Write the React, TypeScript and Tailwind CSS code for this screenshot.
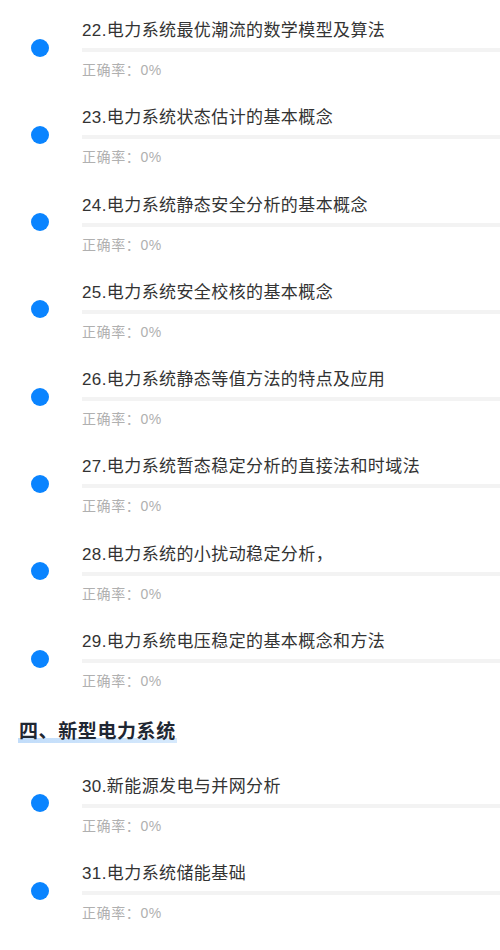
import type React from 'react';

interface Lesson {
  title: string;
  rate: string;
}

const FONT = "font-['Liberation_Sans','Noto_Sans_CJK_SC',sans-serif]";

const GROUP_A: Lesson[] = [
  { title: '22.电力系统最优潮流的数学模型及算法', rate: '0%' },
  { title: '23.电力系统状态估计的基本概念', rate: '0%' },
  { title: '24.电力系统静态安全分析的基本概念', rate: '0%' },
  { title: '25.电力系统安全校核的基本概念', rate: '0%' },
  { title: '26.电力系统静态等值方法的特点及应用', rate: '0%' },
  { title: '27.电力系统暂态稳定分析的直接法和时域法', rate: '0%' },
  { title: '28.电力系统的小扰动稳定分析，', rate: '0%' },
  { title: '29.电力系统电压稳定的基本概念和方法', rate: '0%' },
];

const GROUP_B: Lesson[] = [
  { title: '30.新能源发电与并网分析', rate: '0%' },
  { title: '31.电力系统储能基础', rate: '0%' },
];

/** 单个课节行：蓝点 + 标题 + 进度条 + 正确率 */
const LessonRow: React.FC<{ lesson: Lesson }> = ({ lesson }) => (
  <div className="flex h-[87.3px] items-start pt-[18px]">
    <div className="w-[82px] shrink-0 pl-[30.5px]">
      <div className="mt-[20.5px] h-[18px] w-[18px] rounded-full bg-[#0a84ff]" />
    </div>
    <div className="min-w-0 flex-1">
      <div className="h-[24px] whitespace-nowrap text-[17px] leading-[25px] tracking-[0.4px] text-[#333333]">
        {lesson.title}
      </div>
      <div className="mt-[6px] h-[4px] w-full bg-[#f3f3f3]" />
      <div className="mt-[8px] h-[20px] text-[14px] leading-[20px] tracking-[0.6px] text-[#b0b0b0]">
        正确率：{lesson.rate}
      </div>
    </div>
  </div>
);

export default function App() {
  return (
    <div className={`w-[500px] overflow-hidden bg-white ${FONT}`}>
      {GROUP_A.map((l) => (
        <LessonRow key={l.title} lesson={l} />
      ))}

      {/* 章节标题 */}
      <div className="h-[57.6px] pl-[19px] pt-[20.6px]">
        <span className="relative inline-block">
          <span className="absolute bottom-[2px] left-[-1px] right-[-1px] h-[5px] bg-[linear-gradient(90deg,#c2ddfa,#d6e9fc)]" />
          <span className="relative text-[19px] font-bold leading-[26px] tracking-[0.6px] text-[#1f2733]">
            四、新型电力系统
          </span>
        </span>
      </div>

      {GROUP_B.map((l) => (
        <LessonRow key={l.title} lesson={l} />
      ))}
    </div>
  );
}
